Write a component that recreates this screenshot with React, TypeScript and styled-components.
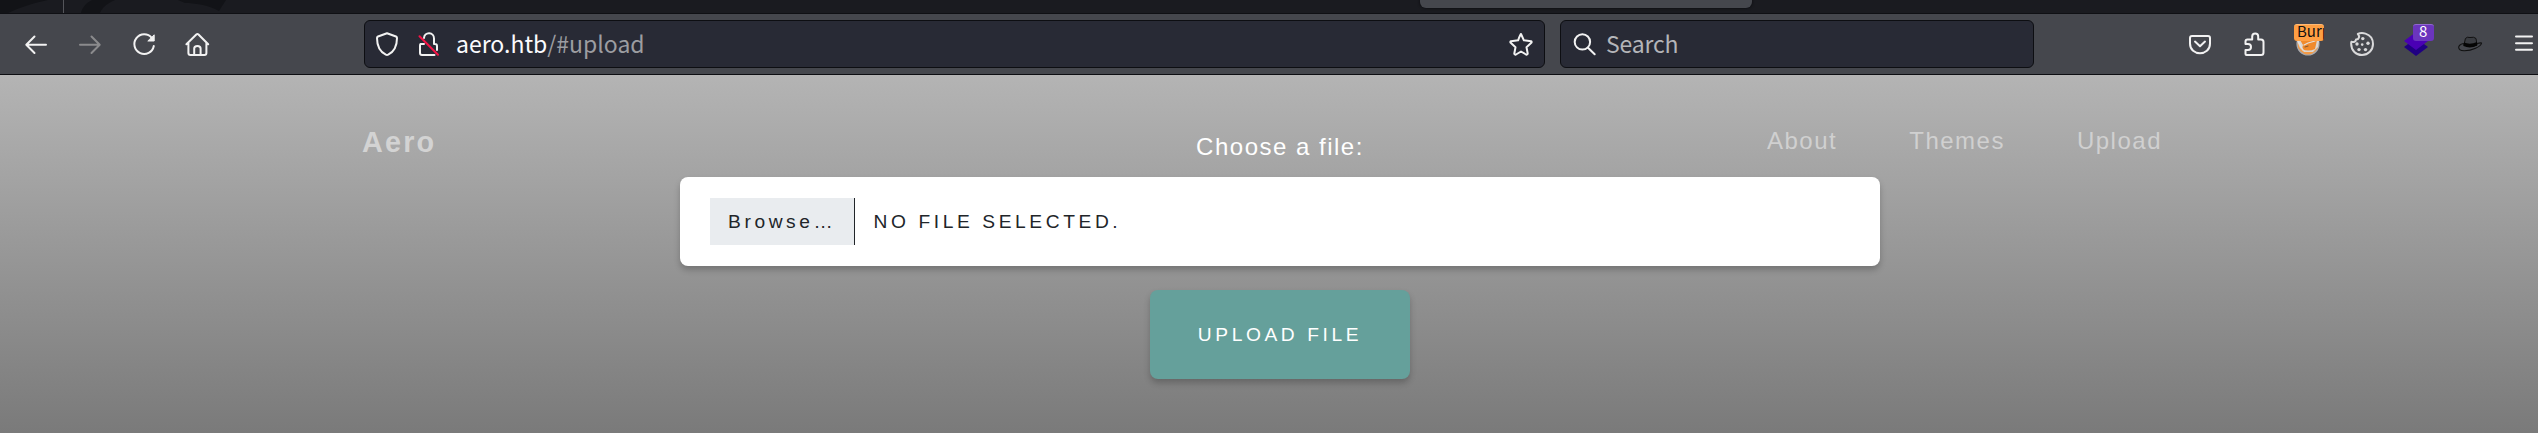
import React from "react";
import styled, { createGlobalStyle } from "styled-components";

const GlobalStyle = createGlobalStyle`
  * { box-sizing: border-box; }
  html, body { margin: 0; padding: 0; }
  body { width: 2538px; height: 433px; overflow: hidden; font-family: "Liberation Sans", Arial, sans-serif; }
`;

const Window = styled.div`
  display: flex;
  flex-direction: column;
  height: 433px;
`;

const TabStrip = styled.div`
  display: flex;
  height: 14px;
  background: #1a1b20;
  border-bottom: 1px solid #0f1014;
`;

const Wallpaper = styled.svg`
  width: 360px;
  height: 13px;
  flex: none;
`;

const ActiveTab = styled.div`
  width: 332px;
  height: 8px;
  margin-left: 1060px;
  border-radius: 0 0 6px 6px;
  background: #45474d;
  box-shadow: 0 0 3px #08080b;
`;

const Toolbar = styled.div`
  display: flex;
  align-items: center;
  height: 61px;
  flex: none;
  background: #45474d;
  border-bottom: 1px solid #0d0e12;
`;

const NavButtons = styled.div`
  display: flex;
  gap: 30px;
  width: 364px;
  padding-left: 24px;
`;

const Field = styled.div<{ $width: number }>`
  display: flex;
  align-items: center;
  width: ${(p) => p.$width}px;
  height: 48px;
  background: #282a35;
  border: 1px solid #0d0e12;
  border-radius: 6px;
  font-family: "Noto Sans CJK SC", "Noto Sans", sans-serif;
  font-size: 23px;
  line-height: 30px;
`;

const UrlBar = styled(Field)`
  padding: 0 11px 0 10px;
`;

const SearchBar = styled(Field)`
  margin-left: 15px;
  padding-left: 11px;
  color: #b4b5b9;
`;

const SearchText = styled.span`
  margin-left: 10px;
  padding-bottom: 2px;
  letter-spacing: -0.2px;
`;

const Url = styled.span`
  flex: 1;
  margin-left: 15px;
  padding-bottom: 2px;
  color: #9c9da1;
`;

const Host = styled.span`
  color: #fbfbfe;
`;

const Icon = styled.svg<{ $color?: string; $gap?: number }>`
  display: block;
  flex: none;
  width: 24px;
  height: 24px;
  margin-left: ${(p) => p.$gap ?? 0}px;
  overflow: visible;
  fill: none;
  stroke: ${(p) => p.$color ?? "#f2f2f2"};
  stroke-width: 2;
  stroke-linecap: round;
  stroke-linejoin: round;
`;

const Extensions = styled.div`
  display: flex;
  gap: 30px;
  margin-left: auto;
  margin-right: 2px;
`;

const Extension = styled.div`
  position: relative;
  width: 24px;
  height: 24px;
`;

const Badge = styled.span<{ $bg: string; $edge: string; $color: string; $left: number; $width: number; $inset: number }>`
  position: absolute;
  top: -8px;
  left: ${(p) => p.$left}px;
  width: ${(p) => p.$width}px;
  height: 17px;
  overflow: hidden;
  padding-left: ${(p) => p.$inset}px;
  border-radius: 3px;
  border-top: 1px solid ${(p) => p.$edge};
  background: ${(p) => p.$bg};
  color: ${(p) => p.$color};
  font: 15px/11px "Noto Sans CJK SC", "Noto Sans", sans-serif;
`;

const Page = styled.main`
  flex: 1;
  display: grid;
  grid-template-columns: 680px 1200px 658px;
  background: linear-gradient(#b4b4b4, #7a7a7a);
`;

const Brand = styled.a`
  margin: 50px 0 0 362px;
  color: #d3d3d3;
  font-size: 28.8px;
  font-weight: bold;
  line-height: 34px;
  letter-spacing: 2.2px;
`;

const Form = styled.form`
  display: flex;
  flex-direction: column;
  align-items: center;
`;

const Label = styled.label`
  margin-top: 58px;
  color: #fff;
  font-size: 24px;
  line-height: 28px;
  letter-spacing: 1.5px;
`;

const FileInput = styled.div`
  display: flex;
  align-items: center;
  width: 1200px;
  height: 89px;
  margin-top: 16px;
  padding-left: 30px;
  border-radius: 8px;
  background: #fff;
  color: #212529;
  box-shadow: 0 4px 6px rgba(0, 0, 0, 0.22);
  font-size: 19.2px;
  letter-spacing: 3.6px;
`;

const Browse = styled.span`
  display: flex;
  align-items: center;
  width: 145px;
  height: 47px;
  padding-left: 18px;
  border-right: 1px solid #212529;
  background: #e9ecef;
`;

const FileName = styled.span`
  margin-left: 18.5px;
`;

const Submit = styled.button`
  width: 260px;
  height: 89px;
  margin-top: 24px;
  padding: 0;
  border: 0;
  border-radius: 8px;
  background: #65a09b;
  color: #fff;
  box-shadow: 0 4px 6px rgba(0, 0, 0, 0.22);
  font: 19.2px "Liberation Sans", Arial, sans-serif;
  letter-spacing: 3.6px;
`;

const Menu = styled.nav`
  display: flex;
  align-items: flex-start;
  gap: 72px;
  /* the menu starts inside the column beside the wide form */
  margin: 52px 0 0 -113px;
`;

const MenuLink = styled.a`
  color: #d0d0d0;
  font-size: 24px;
  line-height: 28px;
  letter-spacing: 1.5px;
`;

export default function App() {
  return (
    <Window>
      <GlobalStyle />
      <TabStrip>
        <Wallpaper viewBox="0 0 360 13">
          <path d="M0 0H48C34 3 18 8 8 13H0ZM92 0H115C106 4 102 8 100 13H81C82 8 86 3 92 0ZM178 0H226L219 11C209 5 194 3 185 3Z" fill="#121317" />
          <path d="M63.5 0V13" stroke="#54555a" />
        </Wallpaper>
        <ActiveTab />
      </TabStrip>
      <Toolbar>
        <NavButtons>
          <Icon viewBox="0 0 24 24"><path d="M22 12.7H2.5M10.5 4.5L2.3 12.7L10.5 21" /></Icon>
          <Icon viewBox="0 0 24 24" $color="#8b8b8d"><path d="M2 12.7H21.5M13.5 4.5L21.7 12.7L13.5 21" /></Icon>
          <Icon viewBox="0 0 24 24"><path d="M19.8 6A9.8 9.8 0 1 0 21.8 14" /><path d="M22.2 3.2V9H16.2Z" fill="#f2f2f2" strokeWidth="1" /></Icon>
          <Icon viewBox="0 0 24 24"><path d="M.4 12.2L10.3 2.5Q11.4 1.6 12.5 2.5L22.2 12.2M2.4 11V21Q2.4 23 4.4 23H18.4Q20.4 23 20.4 21V11M8.2 23V16.5Q8.2 14 11.4 14T14.6 16.5V23" /></Icon>
        </NavButtons>
        <UrlBar $width={1181}>
          <Icon viewBox="0 0 24 24"><path d="M12 1.3L21 4.5Q22 5 22 6C22 15 17.5 20.5 13.2 22.7Q12 23.3 10.8 22.7C6.5 20.5 2 15 2 6Q2 5 3 4.5Z" /></Icon>
          <Icon viewBox="0 0 24 24" $gap={18}>
            <path d="M7 6A5 5 0 0 1 17 6.5V12M17 12H18Q20 12 20 14V18M3.5 12H7M3.5 12Q3 12 3 14V21Q3 23 5 23H17.5" />
            <path d="M2.5 4.2L21 22.8" stroke="#f51345" />
          </Icon>
          <Url><Host>aero.htb</Host>/#upload</Url>
          <Icon viewBox="0 0 24 24"><path d="M12 2L14.9 8.3L22 9.2Q23.2 9.8 22.3 10.8L17.5 15.2L18.7 21.5Q18.4 23 17 22.5L12 19.5L7 22.5Q5.6 23 5.3 21.5L6.5 15.2L1.7 10.8Q.8 9.8 2 9.2L9.1 8.3Q11.3 2.3 12 2Z" /></Icon>
        </UrlBar>
        <SearchBar $width={474}>
          <Icon viewBox="0 0 24 24"><circle cx="10.4" cy="9.9" r="7.7" /><path d="M16 15.7L22.7 22.2" /></Icon>
          <SearchText>Search</SearchText>
        </SearchBar>
        <Extensions>
          <Icon viewBox="0 0 24 24"><path d="M4 4H20Q22 4 22 6V11.5C22 24.5 2 24.5 2 11.5V6Q2 4 4 4ZM7 9.6L12 14.2L17 9.6" /></Icon>
          <Icon viewBox="0 0 24 24"><path d="M4.5 23H19Q21.5 23 21.5 20.5V10Q21.5 7.5 19 7.5H16.2V4.5A3 3 0 0 0 10.2 4.5V7.5H5.5Q3.5 7.5 3.5 9.5V12H6A3 3 0 0 1 6 18H3.5V22Q3.5 23 4.5 23Z" /></Icon>
          <Extension>
            <Icon viewBox="0 0 24 24">
              <circle cx="12" cy="12" r="11" fill="#f39a45" stroke="#a9a9ac" strokeWidth="1.2" />
              <path d="M1 9H23L22 15L19 18L17 20L8 20L4 16Z" fill="#dad6d2" stroke="none" />
              <path d="M4 8L7 13L6 17Q12 20 19 17L21 8Z" fill="#f08a2c" stroke="none" />
              <path d="M2.5 10L7 18M8 13L12 11L19 9" stroke="#e3e0de" strokeWidth="1.2" />
              <path d="M9 15L12 14" stroke="#8a572c" strokeWidth="1.2" />
            </Icon>
            <Badge $bg="#ff9f43" $edge="#ffb973" $color="#111" $left={-2} $width={30} $inset={3}>Burp</Badge>
          </Extension>
          <Icon viewBox="0 0 24 24" $color="#d9d9da">
            <path d="M7.8 2C9.8 1 13 .9 15.5 1.6C20.5 3.2 23 7.5 23 12C23 18 18.2 23 12 23C6 23 1.2 18.5 1.2 12Q1 11 1.4 9.8C3.5 10.5 6 9.8 6 7.6C9 7.5 10.2 4.5 7.8 2Z" />
            <g fill="#d9d9da" stroke="none"><circle cx="12.8" cy="6.6" r="1.7" /><circle cx="7" cy="12" r="1.7" /><circle cx="18" cy="11.3" r="1.7" /><circle cx="12.2" cy="12.6" r="1.3" /><circle cx="9" cy="17.6" r="1.7" /><circle cx="15.5" cy="17.6" r="1.7" /></g>
          </Icon>
          <Extension>
            <Icon viewBox="0 0 24 24">
              <path d="M0 15L4 12H20L24 15L12 24Z" fill="#200082" stroke="none" />
              <path d="M0 9L12 0L24 9L12 18Z" fill="#4a00b4" stroke="none" />
            </Icon>
            <Badge $bg="#6b35bd" $edge="#9068cf" $color="#fff" $left={9} $width={21} $inset={6}>8</Badge>
          </Extension>
          <Icon viewBox="0 0 24 24" $color="#111">
            <path d="M6 13L7.4 6.5Q9 4.5 12 5.5Q16 4.5 18 6.5L19 13Q12 16 6 13Z" fill="#3a3c41" strokeWidth="1" />
            <path d="M6 10.5Q12 13 19 10L19.2 13.5Q12 17 5.5 14Z" fill="#050505" stroke="none" />
            <path d="M5.5 11.5C-1 13 -1 18.5 6 18.8C14 19 23 14.5 23.6 11Q22 10.5 19.5 11.5" strokeWidth="1.1" />
          </Icon>
          <Icon viewBox="0 0 24 24"><path d="M4 4.5H20M4 11.3H20M4 17.8H20" /></Icon>
        </Extensions>
      </Toolbar>
      <Page>
        <Brand>Aero</Brand>
        <Form>
          <Label>Choose a file:</Label>
          <FileInput>
            <Browse>Browse…</Browse>
            <FileName>NO FILE SELECTED.</FileName>
          </FileInput>
          <Submit type="button">UPLOAD FILE</Submit>
        </Form>
        <Menu>
          <MenuLink>About</MenuLink>
          <MenuLink>Themes</MenuLink>
          <MenuLink>Upload</MenuLink>
        </Menu>
      </Page>
    </Window>
  );
}
